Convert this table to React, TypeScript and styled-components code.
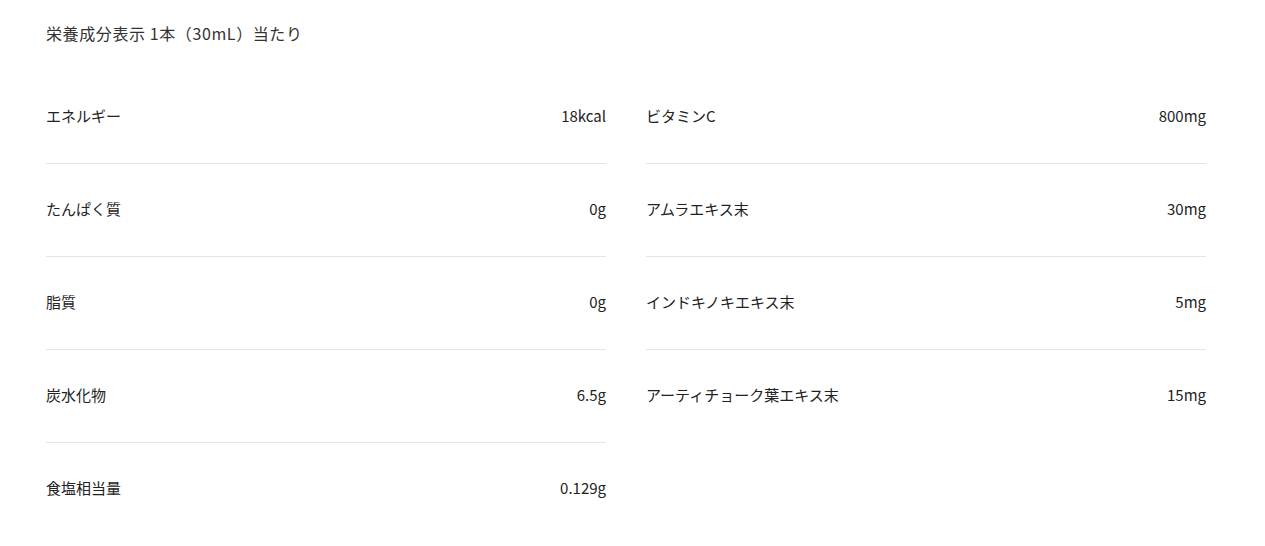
import styled, { createGlobalStyle } from 'styled-components'

const GlobalStyle = createGlobalStyle`
  body {
    margin: 0;
    background: #fff;
    color: #333;
    font-family: 'Noto Sans CJK JP', 'Noto Sans', sans-serif;
  }
`

const left = [
  { label: 'エネルギー', value: '18kcal' },
  { label: 'たんぱく質', value: '0g' },
  { label: '脂質', value: '0g' },
  { label: '炭水化物', value: '6.5g' },
  { label: '食塩相当量', value: '0.129g' }
]

const right = [
  { label: 'ビタミンC', value: '800mg' },
  { label: 'アムラエキス末', value: '30mg' },
  { label: 'インドキノキエキス末', value: '5mg' },
  { label: 'アーティチョーク葉エキス末', value: '15mg' }
]

export default function App () {
  return (
    <>
      <GlobalStyle />
      <Section>
        <Title>栄養成分表示 1本（30mL）当たり</Title>
        <Columns>
          {[left, right].map((col, i) => (
            <List key={i}>
              {col.map(item => (
                <Row key={item.label}>
                  <dt>{item.label}</dt>
                  <dd>{item.value}</dd>
                </Row>
              ))}
            </List>
          ))}
        </Columns>
      </Section>
    </>
  )
}

const Section = styled.section`
  width: 1160px;
  padding: 21px 46px 0;
`

const Title = styled.h2`
  margin: 0;
  font-size: 16px;
  font-weight: 400;
  line-height: 24px;
  letter-spacing: 0.6px;
  color: #333;
`

const Columns = styled.div`
  display: grid;
  grid-template-columns: 560px 560px;
  column-gap: 40px;
  margin-top: 26px;
`

const List = styled.dl`
  margin: 0;
`

const Row = styled.div`
  display: flex;
  justify-content: space-between;
  align-items: center;
  box-sizing: border-box;
  height: 93px;
  padding-bottom: 4px;
  font-size: 15px;
  color: #222;
  border-bottom: 1px solid #e5e5e5;

  &:last-child {
    border-bottom: none;
  }

  dt, dd {
    margin: 0;
  }
`
